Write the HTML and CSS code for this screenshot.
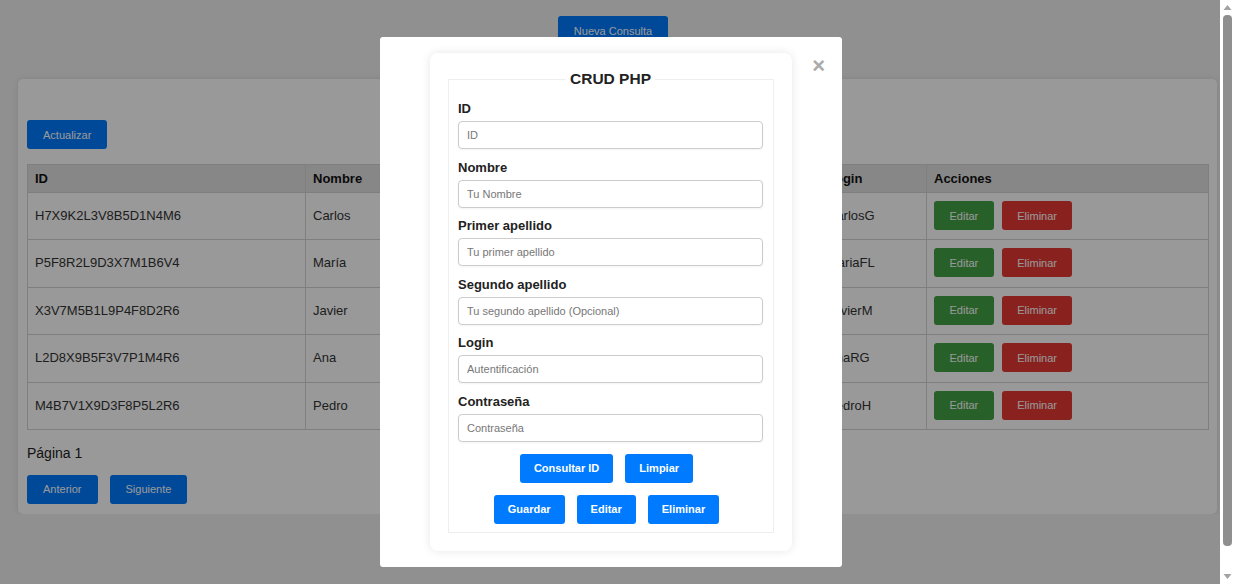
FILE: index.html
```html
<!DOCTYPE html>
<html lang="es">
<head>
<meta charset="utf-8">
<title>CRUD PHP</title>
<link rel="stylesheet" href="styles.css">
</head>
<body>
<div class="top-bar">
  <button class="btn btn-blue">Nueva Consulta</button>
</div>
<div class="page">
  <div class="card">
    <button class="btn btn-blue">Actualizar</button>
    <table class="users">
      <colgroup>
        <col class="c-id"><col class="c-nombre"><col class="c-ap1"><col class="c-ap2"><col class="c-login"><col class="c-acc">
      </colgroup>
      <thead>
        <tr><th>ID</th><th>Nombre</th><th>Primer apellido</th><th>Segundo apellido</th><th>Login</th><th>Acciones</th></tr>
      </thead>
      <tbody>
        <tr><td>H7X9K2L3V8B5D1N4M6</td><td>Carlos</td><td>García</td><td>López</td><td>CarlosG</td><td><div class="actions"><button class="btn btn-green">Editar</button><button class="btn btn-red">Eliminar</button></div></td></tr>
        <tr><td>P5F8R2L9D3X7M1B6V4</td><td>María</td><td>Fernández</td><td>López</td><td>MariaFL</td><td><div class="actions"><button class="btn btn-green">Editar</button><button class="btn btn-red">Eliminar</button></div></td></tr>
        <tr><td>X3V7M5B1L9P4F8D2R6</td><td>Javier</td><td>Martínez</td><td></td><td>JavierM</td><td><div class="actions"><button class="btn btn-green">Editar</button><button class="btn btn-red">Eliminar</button></div></td></tr>
        <tr><td>L2D8X9B5F3V7P1M4R6</td><td>Ana</td><td>Rodríguez</td><td>Gómez</td><td>AnaRG</td><td><div class="actions"><button class="btn btn-green">Editar</button><button class="btn btn-red">Eliminar</button></div></td></tr>
        <tr><td>M4B7V1X9D3F8P5L2R6</td><td>Pedro</td><td>Hernández</td><td></td><td>PedroH</td><td><div class="actions"><button class="btn btn-green">Editar</button><button class="btn btn-red">Eliminar</button></div></td></tr>
      </tbody>
    </table>
    <p class="page-num">Página 1</p>
    <div class="pager">
      <button class="btn btn-blue">Anterior</button>
      <button class="btn btn-blue">Siguiente</button>
    </div>
  </div>
</div>

<div class="overlay">
  <div class="modal">
    <span class="close">&times;</span>
    <div class="form-card">
      <fieldset class="form-set">
        <legend>CRUD PHP</legend>
        <div class="field"><label>ID</label><input type="text" placeholder="ID"></div>
        <div class="field"><label>Nombre</label><input type="text" placeholder="Tu Nombre"></div>
        <div class="field"><label>Primer apellido</label><input type="text" placeholder="Tu primer apellido"></div>
        <div class="field"><label>Segundo apellido</label><input type="text" placeholder="Tu segundo apellido (Opcional)"></div>
        <div class="field"><label>Login</label><input type="text" placeholder="Autentificación"></div>
        <div class="field last"><label>Contraseña</label><input type="password" placeholder="Contraseña"></div>
        <div class="btn-row">
          <button class="btn btn-form">Consultar ID</button>
          <button class="btn btn-form">Limpiar</button>
        </div>
        <div class="btn-row">
          <button class="btn btn-form">Guardar</button>
          <button class="btn btn-form">Editar</button>
          <button class="btn btn-form">Eliminar</button>
        </div>
      </fieldset>
    </div>
  </div>
</div>

<div class="scrollbar" aria-hidden="true">
  <svg class="arrow" width="15" height="15" viewBox="0 0 15 15"><path d="M3.5 10 L7.5 5 L11.5 10 Z" fill="#a3a3a3"/></svg>
  <div class="track"><div class="thumb"></div></div>
  <svg class="arrow" width="15" height="15" viewBox="0 0 15 15"><path d="M3.5 5 L7.5 10 L11.5 5 Z" fill="#a3a3a3"/></svg>
</div>
</body>
</html>
```
FILE: styles.css
```css
html, body {
  margin: 0;
  padding: 0;
}
body {
  background: #f0f0f0;
  font-family: "Liberation Sans", Arial, sans-serif;
  color: #222;
}
.btn {
  font-family: "Liberation Sans", Arial, sans-serif;
  font-size: 11px;
  height: 29px;
  border: none;
  border-radius: 3px;
  padding: 0 16px;
  color: #fff;
  cursor: pointer;
}
.btn-blue { background: #007bff; }
.btn-green { background: #43a047; padding: 0 15.5px; }
.btn-red { background: #e53935; padding: 0 15.5px; }

.top-bar {
  padding: 16px 15px 0 6px;
  text-align: center;
}
.page {
  padding: 34px 18px 0 18px;
}
.card {
  background: #fff;
  border-radius: 5px;
  box-shadow: 0 0 6px rgba(0,0,0,0.1);
  padding: 41px 8px 10px 9px;
}
.users {
  margin-top: 15px;
  width: 100%;
  border-collapse: collapse;
  table-layout: fixed;
  font-size: 13px;
}
.c-id { width: 278px; }
.c-nombre { width: 160px; }
.c-ap1 { width: 177px; }
.c-ap2 { width: 177px; }
.c-login { width: 107px; }
.users th, .users td {
  border: 1px solid #d4d4d4;
  text-align: left;
  padding: 8px 7px 9.4px;
  color: #333;
}
.users th {
  background: #e2e2e2;
  padding: 7px 7px;
  line-height: 13px;
  font-weight: bold;
  color: #111;
}
.users td { height: 29px; box-sizing: content-box; }
.actions {
  display: flex;
  gap: 8px;
}
.page-num {
  margin: 14px 0 0;
  font-size: 14px;
  line-height: 18px;
  color: #222;
}
.pager {
  margin-top: 13px;
  display: flex;
  gap: 12px;
}

.overlay {
  position: fixed;
  top: 0;
  left: 0;
  right: 15px;
  bottom: 0;
  background: rgba(0,0,0,0.4);
  padding: 37px 0 0 2px;
}
.modal {
  position: relative;
  width: 422px;
  margin: 0 auto;
  background: #fff;
  border-radius: 3px;
  padding: 16px 20px;
}
.close {
  position: absolute;
  right: 17px;
  top: 16px;
  font-size: 22px;
  font-weight: bold;
  color: #aaa;
  line-height: 26px;
}
.form-card {
  width: 362px;
  margin: 0 auto;
  background: #fff;
  border-radius: 8px;
  box-shadow: 0 0 10px rgba(0,0,0,0.1);
  padding: 17px 18px 18px 18px;
  box-sizing: border-box;
}
.form-set {
  margin: 0;
  border: 1px solid #eee;
  padding: 13px 10px 8px 9px;
}
.form-set legend {
  margin: 0 auto;
  padding: 0 4px;
  font-size: 15.5px;
  font-weight: bold;
  line-height: 18px;
  color: #222;
}
.field {
  display: flex;
  flex-direction: column;
  margin-bottom: 10.6px;
}
.field.last { margin-bottom: 12px; }
.field label {
  font-size: 13px;
  font-weight: bold;
  line-height: 16px;
  margin-bottom: 4px;
  color: #222;
}
.field input {
  height: 28px;
  box-sizing: border-box;
  border: 1px solid #ccc;
  border-radius: 4px;
  padding: 0 8px;
  font-family: "Liberation Sans", Arial, sans-serif;
  font-size: 11px;
  box-shadow: 0 1px 2px rgba(0,0,0,0.05);
}
.field input::placeholder { color: #777; }
.btn-row {
  display: flex;
  justify-content: center;
  gap: 12px;
  margin-bottom: 12px;
  padding-right: 8px;
}
.btn-row:last-child { margin-bottom: 0; }
.btn-form {
  background: #007bff;
  font-weight: bold;
  padding: 0 14px;
}

.scrollbar {
  position: fixed;
  top: 0;
  right: 0;
  bottom: 0;
  width: 15px;
  background: #fff;
  display: flex;
  flex-direction: column;
}
.scrollbar .arrow { flex: none; display: block; }
.scrollbar .track {
  flex: 1;
  padding: 0 3px;
}
.scrollbar .thumb {
  height: 531px;
  background: #8f8f8f;
  border-radius: 4px;
}
```
